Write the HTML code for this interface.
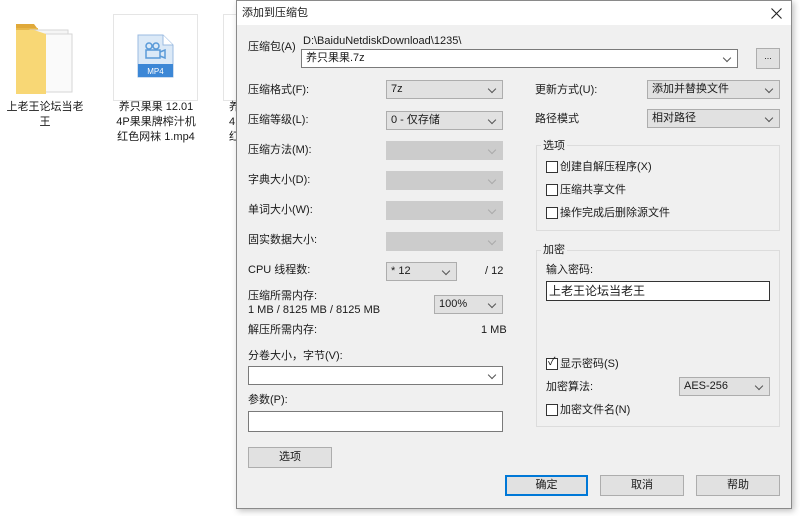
<!DOCTYPE html>
<html><head><meta charset="utf-8"><style>
*{margin:0;padding:0;box-sizing:border-box}
body{width:800px;height:516px;background:#fff;position:relative;overflow:hidden;font-family:"Liberation Sans","Noto Sans CJK SC",sans-serif;font-size:11px;color:#1a1a1a}
.a{position:absolute;white-space:nowrap;line-height:14px}
.dlg{position:absolute;left:236px;top:0;width:556px;height:509px;background:#f0f0f0;border:1px solid #8a8a8a;box-shadow:2px 2px 6px rgba(0,0,0,.25)}
.tb{position:absolute;left:0;top:0;width:100%;height:24px;background:#fff}
.cb{position:absolute;background:#e1e1e1;border:1px solid #adadad;height:19px;padding-left:4px;line-height:17px}
.cb.w{background:#fff;border-color:#7a7a7a}
.cb.d{background:#cccccc;border-color:#cccccc}
.cb::after{content:"";position:absolute;right:7px;top:5px;width:5px;height:5px;border-right:1px solid #555;border-bottom:1px solid #555;transform:rotate(45deg)}
.cb.d::after{border-color:#aaa}
.in{position:absolute;background:#fff;border:1px solid #7a7a7a}
.btn{position:absolute;background:#e1e1e1;border:1px solid #adadad;text-align:center;line-height:19px;height:21px}
.grp{position:absolute;border:1px solid #dcdcdc}
.gl{position:absolute;background:#f0f0f0;padding:0 2px;line-height:14px}
.ck{position:absolute;width:12px;height:12px;border:1px solid #333;background:#fff}
.l{position:absolute;white-space:nowrap;line-height:14px}
</style></head><body>
<svg class="a" style="left:14px;top:22px" width="60" height="74" viewBox="0 0 60 74">
<path d="M2 2h18l3 4h-21z" fill="#e0a93a"/>
<rect x="2" y="6" width="22" height="66" fill="#e8b84a"/>
<rect x="16" y="8" width="38" height="60" fill="#f5f5f5" stroke="#d6d6d6"/>
<rect x="22" y="12" width="36" height="58" fill="#fafafa" stroke="#d6d6d6"/>
<path d="M2 8h18l12 4v60H2z" fill="#f8d775"/>
</svg>
<div class="a" style="left:6px;top:100px;width:78px;text-align:center;white-space:normal;line-height:15px">上老王论坛当老王</div>
<div class="a" style="left:113px;top:14px;width:85px;height:87px;border:1px solid #e5e5e5"></div>
<svg class="a" style="left:137px;top:34px" width="37" height="44" viewBox="0 0 37 44">
<path d="M1 1h25l10 10v32H1z" fill="#dbe9f7" stroke="#9bbbe0"/>
<path d="M26 1v10h10" fill="#fff" stroke="#9bbbe0"/>
<rect x="1" y="30" width="35" height="13" fill="#3c87d6"/>
<text x="18.5" y="40" font-size="8" fill="#fff" text-anchor="middle" font-family="Liberation Sans">MP4</text>
<circle cx="12" cy="12" r="3" fill="none" stroke="#5a9ad8" stroke-width="1.5"/><circle cx="19" cy="12" r="3" fill="none" stroke="#5a9ad8" stroke-width="1.5"/>
<rect x="9" y="16" width="14" height="8" fill="none" stroke="#5a9ad8" stroke-width="1.5"/><path d="M23 18l5-2v8l-5-2" fill="none" stroke="#5a9ad8" stroke-width="1.5"/>
</svg>
<div class="a" style="left:113px;top:100px;width:86px;text-align:center;white-space:normal;line-height:15px">养只果果 12.01<br>4P果果牌榨汁机<br>红色网袜 1.mp4</div>
<div class="a" style="left:223px;top:14px;width:20px;height:87px;border:1px solid #e5e5e5"></div>
<div class="a" style="left:229px;top:100px;line-height:15px">养<br>4<br>红</div>

<div class="dlg">
<div class="tb"></div>
<div class="l" style="left:5px;top:5px">添加到压缩包</div>
<svg style="position:absolute;left:534px;top:7px" width="11" height="11"><path d="M0.5 0.5L10.5 10.5M10.5 0.5L0.5 10.5" stroke="#222" stroke-width="1.1"/></svg>
</div>
<div class="l" style="left:248px;top:40px">压缩包(A)</div>
<div class="l" style="left:303px;top:34px">D:\BaiduNetdiskDownload\1235\</div>
<div class="cb w" style="left:301px;top:49px;width:437px">养只果果.7z</div>
<div class="btn" style="left:756px;top:48px;width:24px;height:21px;line-height:15px;font-size:9px">...</div>

<div class="l" style="left:248px;top:83px">压缩格式(F):</div>
<div class="l" style="left:248px;top:113px">压缩等级(L):</div>
<div class="l" style="left:248px;top:143px">压缩方法(M):</div>
<div class="l" style="left:248px;top:173px">字典大小(D):</div>
<div class="l" style="left:248px;top:203px">单词大小(W):</div>
<div class="l" style="left:248px;top:233px">固实数据大小:</div>
<div class="l" style="left:248px;top:263px">CPU 线程数:</div>
<div class="cb" style="left:386px;top:80px;width:117px">7z</div>
<div class="cb" style="left:386px;top:111px;width:117px">0 - 仅存储</div>
<div class="cb d" style="left:386px;top:141px;width:117px"></div>
<div class="cb d" style="left:386px;top:171px;width:117px"></div>
<div class="cb d" style="left:386px;top:201px;width:117px"></div>
<div class="cb d" style="left:386px;top:232px;width:117px"></div>
<div class="cb" style="left:386px;top:262px;width:71px">* 12</div>
<div class="l" style="left:485px;top:264px">/ 12</div>
<div class="l" style="left:248px;top:289px">压缩所需内存:</div>
<div class="l" style="left:248px;top:303px">1 MB / 8125 MB / 8125 MB</div>
<div class="cb" style="left:434px;top:295px;width:69px">100%</div>
<div class="l" style="left:248px;top:323px">解压所需内存:</div>
<div class="l" style="left:481px;top:323px">1 MB</div>
<div class="l" style="left:248px;top:349px">分卷大小，字节(V):</div>
<div class="cb w" style="left:248px;top:366px;width:255px"></div>
<div class="l" style="left:248px;top:393px">参数(P):</div>
<div class="in" style="left:248px;top:411px;width:255px;height:21px"></div>
<div class="btn" style="left:248px;top:447px;width:84px">选项</div>

<div class="l" style="left:535px;top:83px">更新方式(U):</div>
<div class="cb" style="left:647px;top:80px;width:133px">添加并替换文件</div>
<div class="l" style="left:535px;top:112px">路径模式</div>
<div class="cb" style="left:647px;top:109px;width:133px">相对路径</div>

<div class="grp" style="left:536px;top:145px;width:244px;height:86px"></div>
<div class="gl" style="left:541px;top:139px">选项</div>
<div class="ck" style="left:546px;top:161px"></div><div class="l" style="left:560px;top:160px">创建自解压程序(X)</div>
<div class="ck" style="left:546px;top:184px"></div><div class="l" style="left:560px;top:183px">压缩共享文件</div>
<div class="ck" style="left:546px;top:207px"></div><div class="l" style="left:560px;top:206px">操作完成后删除源文件</div>

<div class="grp" style="left:536px;top:250px;width:244px;height:177px"></div>
<div class="gl" style="left:541px;top:243px">加密</div>
<div class="l" style="left:546px;top:263px">输入密码:</div>
<div class="in" style="left:546px;top:281px;width:224px;height:20px;border-color:#333;padding-left:2px;line-height:18px;font-size:12px">上老王论坛当老王</div>
<div class="ck" style="left:546px;top:358px"></div><div class="l" style="left:548px;top:355px;font-size:11px">✓</div>
<div class="l" style="left:560px;top:357px">显示密码(S)</div>
<div class="l" style="left:546px;top:380px">加密算法:</div>
<div class="cb" style="left:679px;top:377px;width:91px">AES-256</div>
<div class="ck" style="left:546px;top:404px"></div><div class="l" style="left:560px;top:403px">加密文件名(N)</div>

<div class="btn" style="left:505px;top:475px;width:83px;border:2px solid #0078d7;line-height:17px">确定</div>
<div class="btn" style="left:600px;top:475px;width:84px">取消</div>
<div class="btn" style="left:696px;top:475px;width:84px">帮助</div>
</body></html>
